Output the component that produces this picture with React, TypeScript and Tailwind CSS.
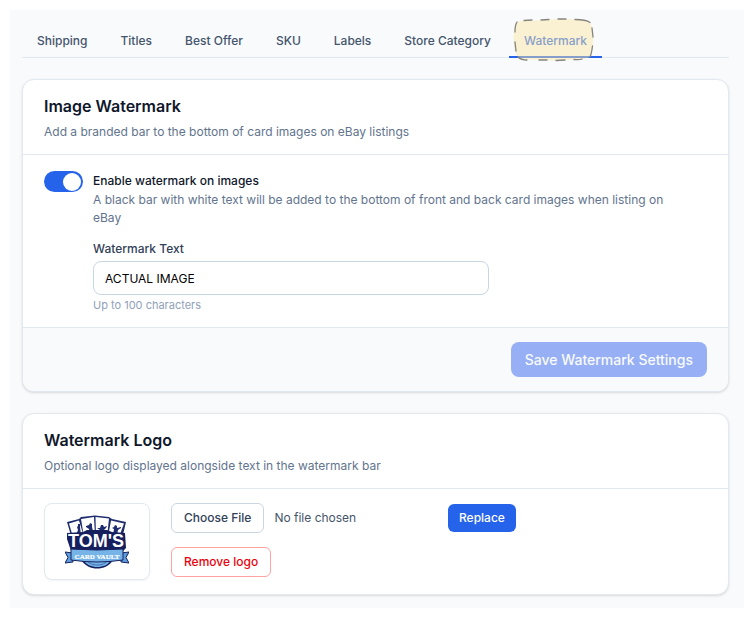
import { useState } from 'react';
import type { ReactNode } from 'react';
import clsx from 'clsx';

const tabs = ['Shipping', 'Titles', 'Best Offer', 'SKU', 'Labels', 'Store Category', 'Watermark'];

// Hand-drawn marker around the current tab
const TabHighlight = () => (
  <svg
    className="pointer-events-none absolute top-[-4px] left-[4px] h-[46px] w-[82px]"
    viewBox="0 0 82 46"
    fill="none"
    aria-hidden="true"
  >
    <path
      d="M9 3C24 3 36 1 54 1C68 1 78 3 79 9C81 18 80 31 78 37C76 42 68 41 56 42C40 43 20 42 11 41C4 40 2 36 1 28C0 18 1 9 3 6C4 4 6 3 9 3Z"
      fill="#fce69f"
      fillOpacity="0.45"
    />
    <g stroke="#86847c" strokeWidth="1.3" strokeLinecap="round">
      <path d="M2 14Q2 7 4 4M11 2.500L19 2M28 2L36 1.500M45 1L53 1M62 1.500Q73 1.500 77 4.500M79 10L80 19M79.500 28Q78.500 36 77 39" />
      <path d="M2 24L3 33M5 39Q8 42 14 42M26 42H34M43 42.500L52 42M61 41.500Q67 42 69 41" />
    </g>
  </svg>
);

const VaultLogo = () => (
  <svg className="h-[54px] w-[64px]" viewBox="0 0 64 54" role="img" aria-label="Tom's Card Vault">
    {/* Cards */}
    <path d="M2 7L14 4L16 2L30 0.500L44 2L47 4L61 7L57 24H7Z" fill="#1f2d6e" />
    <g fill="#fff">
      <path d="M4 8.500L14 5.500L19 22L8 22Z" />
      <path d="M16 4L29 2L30 22L19 22Z" />
      <path d="M30.500 2L44 3.500L42 22L31 22Z" />
      <path d="M46 5.500L59 8.500L54 22L43 22Z" />
    </g>
    {/* Player silhouettes */}
    <g fill="#1f2d6e">
      <path d="M11 20L13 15L12 12L13 11L13 9L15 9L15 12L16 20Z" />
      <path d="M21 11L24 10L25 8L27 9L27 12L28 16V20H25L24 14L21 12Z" />
      <path d="M32 13L35 13L36 10L38 10L39 12L42 11L41 13L39 15L40 20H34L35 15Z" />
      <path d="M47 13L49 12L50 10L52 11L52 13L56 12V13L53 15L52 20H48L49 14Z" />
    </g>
    <path d="M2 18L18 17L22 15H42L47 17L60 18L61 33L58 36H6L4 30L2 24Z" fill="#16205f" />
    {/* Seal under the ribbon */}
    <path d="M16 45C20 51 26 53.500 32 53.500C38 53.500 45 51 48 45Z" fill="#16205f" />
    <path d="M18 45C22 50 27 52 32 52C38 52 43 50 46 45Z" fill="#76b4e8" />
    <path d="M21 45C25 49 28 50 32 50C37 50 40 49 43 45" stroke="#3f6cae" strokeWidth="1" fill="none" />
    {/* Ribbon */}
    <path
      d="M0 37L8 38V47L0 48L3 42.500ZM64 37L56 38V47L64 48L61 42.500Z"
      fill="#5d9ddb"
      stroke="#16205f"
      strokeWidth="1"
    />
    <path d="M6 34Q32 36 58 34V45Q32 49 6 45Z" fill="#76b4e8" stroke="#16205f" strokeWidth="1" />
    <text
      x="31"
      y="32"
      textAnchor="middle"
      fontFamily="Liberation Sans, sans-serif"
      fontWeight="700"
      fontSize="18"
      fill="#fff"
      stroke="#16205f"
      strokeWidth="1.5"
      paintOrder="stroke"
    >
      TOM'S
    </text>
    <text
      x="32"
      y="44"
      textAnchor="middle"
      fontFamily="Liberation Serif, serif"
      fontWeight="700"
      fontSize="7"
      fill="#fff"
      stroke="#fff"
      strokeWidth="0.2"
    >
      CARD VAULT
    </text>
  </svg>
);

interface CardProps {
  title: string;
  description: string;
  children: ReactNode;
}

const Card = ({ title, description, children }: CardProps) => (
  <section className="overflow-hidden rounded-xl border border-slate-200 bg-white shadow-sm">
    <header className="border-b border-slate-200 px-[21px] pt-[15px] pb-[13px]">
      <h2 className="text-[16px] leading-[22px] font-semibold text-slate-900">{title}</h2>
      <p className="mt-[6px] text-slate-500">{description}</p>
    </header>
    {children}
  </section>
);

const App = () => {
  const [activeTab, setActiveTab] = useState('Watermark');
  const [enabled, setEnabled] = useState(true);
  const [text, setText] = useState('ACTUAL IMAGE');

  return (
    <div className="bg-white p-[10px] font-['Inter',sans-serif] text-[12px] leading-[18px]">
      <main className="bg-slate-50 pt-3 pr-[15px] pb-[13px] pl-3">
        <nav className="flex gap-[3px] border-b border-slate-200">
          {tabs.map((tab) => (
            <button
              key={tab}
              type="button"
              onClick={() => setActiveTab(tab)}
              className={clsx(
                'relative -mb-px border-b-2 px-[15px] pt-[10px] pb-[6px] font-medium whitespace-nowrap',
                activeTab === tab ? 'border-[#2563eb] text-[#2563eb]' : 'border-transparent text-slate-600'
              )}
            >
              {tab}
              {activeTab === tab && <TabHighlight />}
            </button>
          ))}
        </nav>

        <div className="mt-[21px] flex flex-col gap-[21px]">
          <Card title="Image Watermark" description="Add a branded bar to the bottom of card images on eBay listings">
            <div className="flex items-start gap-[10px] px-[21px] pt-4 pb-[14px]">
              <input
                id="watermark-enabled"
                type="checkbox"
                role="switch"
                checked={enabled}
                onChange={(e) => setEnabled(e.target.checked)}
                className="flex h-[21px] w-[39px] shrink-0 cursor-pointer appearance-none items-center rounded-full bg-slate-300 px-[2px] before:size-[18px] before:rounded-full before:bg-white checked:justify-end checked:bg-[#2563eb]"
              />
              <div className="min-w-0 flex-1">
                <label htmlFor="watermark-enabled" className="block leading-[20px] font-medium text-slate-900">
                  Enable watermark on images
                </label>
                <p className="pr-6 text-slate-500">
                  A black bar with white text will be added to the bottom of front and back card images when listing on
                  eBay
                </p>
                <label htmlFor="watermark-text" className="mt-[13px] block font-medium text-slate-700">
                  Watermark Text
                </label>
                <input
                  id="watermark-text"
                  type="text"
                  maxLength={100}
                  value={text}
                  onChange={(e) => setText(e.target.value)}
                  className="mt-[3px] block h-[34px] w-full max-w-[396px] rounded-lg border border-slate-300 bg-white px-[11px] text-black"
                />
                <p className="mt-[2px] text-[11px] leading-4 text-slate-400">Up to 100 characters</p>
              </div>
            </div>
            <footer className="flex justify-end border-t border-slate-200 bg-slate-50 px-[21px] py-[14px]">
              <button
                type="button"
                disabled
                className="h-[35px] rounded-lg bg-[#97b0f5] px-[14px] text-[14px] font-medium text-slate-50"
              >
                Save Watermark Settings
              </button>
            </footer>
          </Card>

          <Card title="Watermark Logo" description="Optional logo displayed alongside text in the watermark bar">
            <div className="flex items-start gap-[21px] px-[21px] py-[14px]">
              <div className="flex h-[77px] w-[106px] shrink-0 items-center justify-center rounded-lg border border-slate-200 bg-white shadow-xs">
                <VaultLogo />
              </div>
              <div className="flex flex-col items-start gap-[14px]">
                <div className="flex items-center gap-[11px]">
                  <input
                    type="file"
                    accept="image/*"
                    aria-label="Logo file"
                    className="w-[266px] text-slate-600 file:mr-[10px] file:h-[30px] file:rounded-md file:border file:border-solid file:border-slate-300 file:bg-white file:px-[12px] file:font-medium file:text-slate-700"
                  />
                  <button
                    type="button"
                    className="h-[28px] rounded-md bg-[#2563eb] px-[11px] font-medium text-white"
                  >
                    Replace
                  </button>
                </div>
                <button
                  type="button"
                  className="h-[30px] rounded-md border border-red-300 bg-white px-[12px] font-medium text-red-600"
                >
                  Remove logo
                </button>
              </div>
            </div>
          </Card>
        </div>
      </main>
    </div>
  );
};

export default App;
